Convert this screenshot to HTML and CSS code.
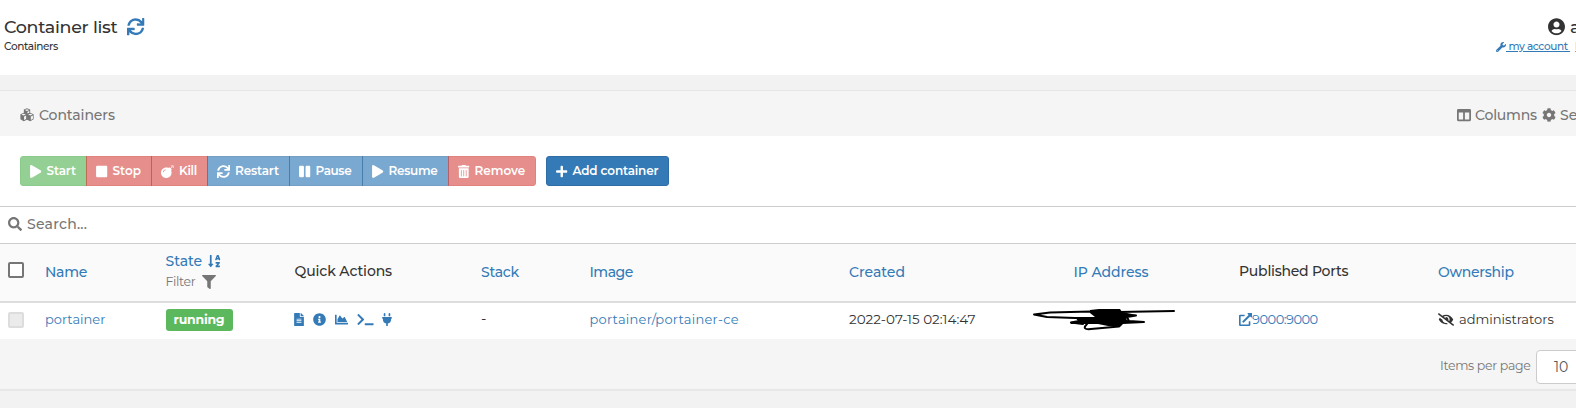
FILE: index.html
```
<!DOCTYPE html>
<html lang="en">
<head>
<meta charset="utf-8">
<title>Container list</title>
<link rel="stylesheet" href="styles.css">
</head>
<body>
<svg class="sprite" aria-hidden="true">
  <symbol id="sync" viewBox="0 0 512 512"><path d="M440.65 12.57l4 82.77A247.16 247.16 0 0 0 255.83 8C134.73 8 33.91 94.92 12.29 209.82A12 12 0 0 0 24.09 224h49.05a12 12 0 0 0 11.67-9.26 175.91 175.91 0 0 1 317-56.94l-101.46-4.86a12 12 0 0 0-12.57 12v47.41a12 12 0 0 0 12 12H500a12 12 0 0 0 12-12V12a12 12 0 0 0-12-12h-47.37a12 12 0 0 0-11.98 12.57zM255.83 432a175.61 175.61 0 0 1-146-77.8l101.8 4.87a12 12 0 0 0 12.57-12v-47.4a12 12 0 0 0-12-12H12a12 12 0 0 0-12 12V500a12 12 0 0 0 12 12h47.35a12 12 0 0 0 12-12.6l-4.15-82.57A247.17 247.17 0 0 0 255.83 504c121.11 0 221.93-86.92 243.55-201.82a12 12 0 0 0-11.8-14.18h-49.05a12 12 0 0 0-11.67 9.26A175.86 175.86 0 0 1 255.83 432z"/></symbol>
  <symbol id="play" viewBox="0 0 448 512"><path d="M424.4 214.7L72.4 6.6C43.8-10.3 0 6.1 0 47.9V464c0 37.5 40.7 60.1 72.4 41.3l352-208c31.4-18.5 31.5-64.1 0-82.6z"/></symbol>
  <symbol id="stop" viewBox="0 0 448 512"><rect y="32" width="448" height="448" rx="48"/></symbol>
  <symbol id="pause" viewBox="0 0 448 512"><rect y="32" width="192" height="448" rx="48"/><rect x="256" y="32" width="192" height="448" rx="48"/></symbol>
  <symbol id="bomb" viewBox="0 0 512 512"><path d="M440.500 88.500l-52 52L415 167c9.400 9.400 9.400 24.600 0 33.900l-17.400 17.400c11.800 26.100 18.400 55.100 18.400 85.600 0 114.900-93.100 208-208 208S0 418.900 0 304 93.100 96 208 96c30.500 0 59.500 6.600 85.600 18.400L311 97c9.400-9.400 24.600-9.400 33.900 0l26.500 26.500 52-52 17.100 17zM500 60h-24c-6.600 0-12 5.400-12 12s5.400 12 12 12h24c6.600 0 12-5.400 12-12s-5.400-12-12-12zM440 0c-6.600 0-12 5.400-12 12v24c0 6.600 5.400 12 12 12s12-5.400 12-12V12c0-6.600-5.400-12-12-12zm33.900 55l17-17c4.700-4.700 4.700-12.300 0-17-4.700-4.700-12.300-4.700-17 0l-17 17c-4.700 4.700-4.700 12.300 0 17 4.800 4.700 12.400 4.700 17 0zm-67.800 0c4.700 4.700 12.300 4.700 17 0 4.700-4.700 4.700-12.300 0-17l-17-17c-4.700-4.700-12.300-4.700-17 0-4.700 4.700-4.700 12.300 0 17l17 17zm67.800 34c-4.700-4.700-12.300-4.700-17 0-4.700 4.700-4.700 12.300 0 17l17 17c4.700 4.700 12.300 4.700 17 0 4.700-4.700 4.700-12.300 0-17l-17-17zM112 272c0-35.300 28.700-64 64-64 8.800 0 16-7.200 16-16s-7.200-16-16-16c-52.900 0-96 43.100-96 96 0 8.800 7.200 16 16 16s16-7.200 16-16z"/></symbol>
  <symbol id="trash" viewBox="0 0 448 512"><path fill-rule="evenodd" d="M32 464a48 48 0 0 0 48 48h288a48 48 0 0 0 48-48V128H32zm272-256a16 16 0 0 1 32 0v224a16 16 0 0 1-32 0zm-96 0a16 16 0 0 1 32 0v224a16 16 0 0 1-32 0zm-96 0a16 16 0 0 1 32 0v224a16 16 0 0 1-32 0zM432 32H312l-9.400-18.700A24 24 0 0 0 281.100 0H166.800a23.700 23.700 0 0 0-21.400 13.300L136 32H16A16 16 0 0 0 0 48v32a16 16 0 0 0 16 16h416a16 16 0 0 0 16-16V48a16 16 0 0 0-16-16z"/></symbol>
  <symbol id="plus" viewBox="0 0 448 512"><path d="M416 208H272V64c0-17.670-14.330-32-32-32h-32c-17.670 0-32 14.330-32 32v144H32c-17.670 0-32 14.330-32 32v32c0 17.670 14.330 32 32 32h144v144c0 17.670 14.330 32 32 32h32c17.670 0 32-14.330 32-32V304h144c17.670 0 32-14.330 32-32v-32c0-17.670-14.330-32-32-32z"/></symbol>
  <symbol id="search" viewBox="0 0 512 512"><path d="M505 442.700L405.300 343c-4.500-4.500-10.600-7-17-7H372c27.600-35.300 44-79.700 44-128C416 93.100 322.900 0 208 0S0 93.100 0 208s93.100 208 208 208c48.300 0 92.700-16.400 128-44v16.300c0 6.400 2.500 12.500 7 17l99.700 99.700c9.400 9.400 24.600 9.400 33.900 0l28.300-28.300c9.400-9.400 9.400-24.600.1-34zM208 336c-70.700 0-128-57.200-128-128 0-70.700 57.200-128 128-128 70.700 0 128 57.200 128 128 0 70.700-57.200 128-128 128z"/></symbol>
  <symbol id="filter" viewBox="0 0 512 512"><path d="M487.976 0H24.028C2.710 0-8.047 25.866 7.058 40.971L192 225.941V432c0 7.831 3.821 15.170 10.237 19.662l80 55.980C298.020 518.690 320 507.493 320 487.980V225.941l184.947-184.970C520.021 25.896 509.338 0 487.976 0z"/></symbol>
  <symbol id="sort" viewBox="0 0 448 512"><path d="M176 352h-48V48a16 16 0 0 0-16-16H80a16 16 0 0 0-16 16v304H16c-14.190 0-21.360 17.240-11.290 27.310l80 96a16 16 0 0 0 22.620 0l80-96C197.350 369.260 190.220 352 176 352zM416 288H288a16 16 0 0 0-16 16v32a16 16 0 0 0 16 16h56l-61.260 70.450A32 32 0 0 0 272 446.370V464a16 16 0 0 0 16 16h128a16 16 0 0 0 16-16v-32a16 16 0 0 0-16-16h-56l61.260-70.450A32 32 0 0 0 432 321.630V304a16 16 0 0 0-16-16zm31.060-85.380l-59.270-160A16 16 0 0 0 372.720 32h-41.440a16 16 0 0 0-15.070 10.620l-59.270 160A16 16 0 0 0 272 224h24.830a16 16 0 0 0 15.230-11.080l4.420-12.920h71l4.410 12.920A16 16 0 0 0 407.160 224H432a16 16 0 0 0 15.060-21.380zM335.610 144L352 96l16.390 48z"/></symbol>
  <symbol id="cubes" viewBox="0 0 512 512"><path fill-rule="evenodd" d="M256 8l116 44v125l126 50v180l-122 78-120-58-120 58-122-78V227l126-50V52zM256 44l-80 30 80 32 80-32zM272 200l68-28v-64l-68 28zM132 212l-84 30 84 34 84-34zM148 442l76-38V276l-76 32zM380 212l-84 30 84 34 84-34zM396 442l76-48V276l-76 32z"/></symbol>
  <symbol id="user" viewBox="0 0 496 512"><path d="M248 8C111 8 0 119 0 256s111 248 248 248 248-111 248-248S385 8 248 8zm0 96c48.600 0 88 39.400 88 88s-39.400 88-88 88-88-39.400-88-88 39.400-88 88-88zm0 344c-58.700 0-111.300-26.600-146.500-68.200 18.800-35.400 55.600-59.800 98.500-59.800 2.400 0 4.800.4 7.100 1.100 13 4.200 26.600 6.900 40.900 6.900 14.300 0 28-2.700 40.900-6.900 2.300-.7 4.700-1.100 7.100-1.100 42.900 0 79.700 24.400 98.500 59.800C359.300 421.400 306.700 448 248 448z"/></symbol>
  <symbol id="wrench" viewBox="0 0 512 512"><path d="M507.730 109.100c-2.240-9.030-13.540-12.090-20.120-5.510l-74.360 74.360-67.880-11.310-11.310-67.880 74.360-74.360c6.620-6.620 3.430-17.900-5.660-20.160-47.380-11.740-99.550.91-136.580 37.930-39.640 39.640-50.550 97.100-34.050 147.200L18.740 402.760c-24.990 24.990-24.990 65.510 0 90.500 24.990 24.990 65.510 24.990 90.500 0l213.210-213.210c50.120 16.710 107.470 5.680 147.370-34.220 37.070-37.070 49.700-89.320 37.910-136.730zM64 472c-13.250 0-24-10.750-24-24 0-13.260 10.750-24 24-24s24 10.740 24 24c0 13.250-10.750 24-24 24z"/></symbol>
  <symbol id="columns" viewBox="0 0 512 512"><path d="M464 32H48C21.490 32 0 53.490 0 80v352c0 26.510 21.490 48 48 48h416c26.510 0 48-21.490 48-48V80c0-26.510-21.490-48-48-48zM224 416H64V160h160v256zm224 0H288V160h160v256z"/></symbol>
  <symbol id="cog" viewBox="0 0 512 512"><path d="M487.400 315.700l-42.600-24.600c4.300-23.200 4.300-47 0-70.200l42.600-24.600c4.900-2.800 7.100-8.600 5.500-14-11.100-35.600-30-67.800-54.700-94.600-3.800-4.100-10-5.100-14.800-2.300L380.800 110c-17.900-15.400-38.500-27.300-60.800-35.100V25.800c0-5.600-3.900-10.500-9.400-11.700-36.700-8.200-74.300-7.800-109.200 0-5.500 1.200-9.400 6.100-9.400 11.700V75c-22.200 7.900-42.800 19.800-60.800 35.100L88.700 85.500c-4.900-2.800-11-1.900-14.800 2.300-24.700 26.700-43.600 58.900-54.700 94.600-1.700 5.400.6 11.200 5.500 14L67.300 221c-4.300 23.200-4.300 47 0 70.200l-42.600 24.600c-4.900 2.800-7.100 8.600-5.500 14 11.100 35.600 30 67.800 54.700 94.600 3.800 4.100 10 5.100 14.800 2.300l42.600-24.600c17.900 15.400 38.500 27.300 60.800 35.100v49.200c0 5.600 3.900 10.500 9.400 11.700 36.700 8.200 74.300 7.800 109.200 0 5.500-1.200 9.400-6.100 9.400-11.700v-49.200c22.200-7.900 42.800-19.800 60.800-35.100l42.600 24.600c4.900 2.800 11 1.900 14.800-2.300 24.700-26.700 43.600-58.900 54.700-94.600 1.500-5.500-.7-11.300-5.600-14.100zM256 336c-44.100 0-80-35.900-80-80s35.900-80 80-80 80 35.900 80 80-35.900 80-80 80z"/></symbol>
  <symbol id="file" viewBox="0 0 384 512"><path fill-rule="evenodd" d="M224 136V0H24A24 24 0 0 0 0 24v464a24 24 0 0 0 24 24h336a24 24 0 0 0 24-24V160H248a24 24 0 0 1-24-24zM96 224h192v36H96zm0 64h192v36H96zm0 64h192v36H96zM384 122v6H256V0h6a24 24 0 0 1 17 7l98 98a24 24 0 0 1 7 17z"/></symbol>
  <symbol id="info" viewBox="0 0 512 512"><path d="M256 8C119.043 8 8 119.083 8 256c0 136.997 111.043 248 248 248s248-111.003 248-248C504 119.083 392.957 8 256 8zm0 110c23.196 0 42 18.804 42 42s-18.804 42-42 42-42-18.804-42-42 18.804-42 42-42zm56 254c0 6.627-5.373 12-12 12h-88c-6.627 0-12-5.373-12-12v-24c0-6.627 5.373-12 12-12h12v-64h-12c-6.627 0-12-5.373-12-12v-24c0-6.627 5.373-12 12-12h64c6.627 0 12 5.373 12 12v100h12c6.627 0 12 5.373 12 12v24z"/></symbol>
  <symbol id="chart" viewBox="0 0 512 512"><path d="M500 384c6.600 0 12 5.400 12 12v40c0 6.600-5.400 12-12 12H12c-6.600 0-12-5.400-12-12V76c0-6.600 5.400-12 12-12h40c6.600 0 12 5.400 12 12v308h436zM372.700 159.500L288 216l-85.300-113.700c-5.100-6.800-15.500-6.300-19.900 1L96 248v104h384l-89.900-187.800c-3.200-6.500-11.400-8.700-17.400-4.700z"/></symbol>
  <symbol id="terminal" viewBox="0 0 640 512"><path d="M257.981 272.971L63.638 467.314c-9.373 9.373-24.569 9.373-33.941 0L7.029 444.647c-9.357-9.357-9.375-24.522-.04-33.901L161.011 256 6.990 101.255c-9.335-9.379-9.317-24.544.04-33.901l22.667-22.667c9.373-9.373 24.569-9.373 33.941 0L257.981 239.030c9.373 9.372 9.373 24.568 0 33.941zM640 456v-32c0-13.255-10.745-24-24-24H312c-13.255 0-24 10.745-24 24v32c0 13.255 10.745 24 24 24h304c13.255 0 24-10.745 24-24z"/></symbol>
  <symbol id="plug" viewBox="0 0 384 512"><path d="M320 32a32 32 0 0 0-64 0v96h64zm48 128H16A16 16 0 0 0 0 176v32a16 16 0 0 0 16 16h16v32a160.070 160.070 0 0 0 128 156.800V512h64v-99.200A160.070 160.070 0 0 0 352 256v-32h16a16 16 0 0 0 16-16v-32a16 16 0 0 0-16-16zM128 32a32 32 0 0 0-64 0v96h64z"/></symbol>
  <symbol id="external" viewBox="0 0 512 512"><path d="M432 320h-32a16 16 0 0 0-16 16v112H64V128h144a16 16 0 0 0 16-16V80a16 16 0 0 0-16-16H48a48 48 0 0 0-48 48v352a48 48 0 0 0 48 48h352a48 48 0 0 0 48-48V336a16 16 0 0 0-16-16zM488 0H360c-21.370 0-32.050 25.910-17 41l35.730 35.730L135 320.370a24 24 0 0 0 0 34L157.670 377a24 24 0 0 0 34 0l243.610-243.680L471 169c15 15 41 4.500 41-17V24a24 24 0 0 0-24-24z"/></symbol>
  <symbol id="eye-slash" viewBox="0 0 640 512"><path d="M320 400c-75.850 0-137.250-58.710-142.900-133.110L72.200 185.820c-13.790 17.300-26.480 35.590-36.720 55.590a32.350 32.350 0 0 0 0 29.190C89.710 376.410 197.070 448 320 448c26.910 0 52.870-4 77.890-10.460L346 397.390a144.130 144.130 0 0 1-26 2.610zm313.820 58.100l-110.550-85.440a331.250 331.250 0 0 0 81.250-102.070 32.350 32.350 0 0 0 0-29.190C550.290 135.590 442.930 64 320 64a308.150 308.150 0 0 0-147.320 37.700L45.460 3.370A16 16 0 0 0 23 6.180L3.370 31.450A16 16 0 0 0 6.180 53.900l588.360 454.730a16 16 0 0 0 22.460-2.810l19.640-25.270a16 16 0 0 0-2.820-22.450zm-183.720-142l-39.300-30.380A94.750 94.750 0 0 0 416 256a94.760 94.760 0 0 0-121.310-92.210A47.650 47.650 0 0 1 304 192a46.640 46.640 0 0 1-1.540 10l-73.610-56.890A142.310 142.310 0 0 1 320 112a143.920 143.920 0 0 1 144 144c0 21.630-5.290 41.790-13.900 60.110z"/></symbol>
</svg>

<header class="top">
  <div class="top-left">
    <h1 class="title"><span class="title-text">Container list</span><svg class="icon refresh"><use href="#sync"/></svg></h1>
    <div class="crumb">Containers</div>
  </div>
  <div class="top-right">
    <div class="user"><svg class="icon user-icon"><use href="#user"/></svg><span>admin</span></div>
    <div class="links">
      <a class="account"><svg class="icon wrench"><use href="#wrench"/></svg><span class="account-text">&nbsp;my account&nbsp;</span></a>
      <a class="logout">log out</a>
    </div>
  </div>
</header>

<main class="widget">
  <div class="widget-head">
    <div class="heading"><svg class="icon cubes"><use href="#cubes"/></svg><span class="t-containers">Containers</span></div>
    <div class="tools">
      <svg class="icon i14"><use href="#columns"/></svg><span class="t-columns">Columns</span>
      <svg class="icon i14"><use href="#cog"/></svg><span class="t-settings">Settings</span>
    </div>
  </div>

  <div class="actions">
    <div class="group">
      <button class="btn green b-start"><svg class="icon w-play"><use href="#play"/></svg><span>Start</span></button>
      <button class="btn red b-stop"><svg class="icon w-play"><use href="#stop"/></svg><span>Stop</span></button>
      <button class="btn red b-kill"><svg class="icon w-sync"><use href="#bomb"/></svg><span>Kill</span></button>
      <button class="btn blue b-restart"><svg class="icon w-sync"><use href="#sync"/></svg><span>Restart</span></button>
      <button class="btn blue b-pause"><svg class="icon w-play"><use href="#pause"/></svg><span>Pause</span></button>
      <button class="btn blue b-resume"><svg class="icon w-play"><use href="#play"/></svg><span>Resume</span></button>
      <button class="btn red b-remove"><svg class="icon w-play"><use href="#trash"/></svg><span>Remove</span></button>
    </div>
    <button class="btn add"><svg class="icon w-play"><use href="#plus"/></svg><span>Add container</span></button>
  </div>

  <div class="search"><svg class="icon i14"><use href="#search"/></svg><span>Search...</span></div>

  <div class="row thead">
    <div><span class="check"></span></div>
    <div class="link t-name">Name</div>
    <div class="state">
      <div class="link state-top"><span class="t-state">State</span><svg class="icon sort"><use href="#sort"/></svg></div>
      <div class="filter"><span class="t-filter">Filter</span><svg class="icon i14"><use href="#filter"/></svg></div>
    </div>
    <div class="plain">Quick Actions</div>
    <div class="link t-stack">Stack</div>
    <div class="link t-image">Image</div>
    <div class="link">Created</div>
    <div class="link t-ip">IP Address</div>
    <div class="plain t-ports">Published Ports</div>
    <div class="link t-owner">Ownership</div>
  </div>

  <div class="row tbody">
    <div><span class="check disabled"></span></div>
    <div class="blue-text">portainer</div>
    <div><span class="badge">running</span></div>
    <div class="quick">
      <svg class="icon q-file"><use href="#file"/></svg>
      <svg class="icon q-info"><use href="#info"/></svg>
      <svg class="icon q-info"><use href="#chart"/></svg>
      <svg class="icon q-term"><use href="#terminal"/></svg>
      <svg class="icon q-file"><use href="#plug"/></svg>
    </div>
    <div>-</div>
    <div class="blue-text t-ce">portainer/portainer-ce</div>
    <div class="t-date">2022-07-15 02:14:47</div>
    <div class="redacted">
      <svg class="scribble" viewBox="0 0 144 24">
        <path fill="none" stroke="#000" stroke-width="2" stroke-linecap="round" stroke-linejoin="round" d="M141 4L86 5 58 4.500 17 5.500 1 7.500 14 10 42 11 62 11M44 11L46 14 38 15.500 50 17M84 8.500L103 8.500 94 10 96 14 111 15M54 17Q48 23 58 22L86 19.500"/>
        <path d="M57 3L66 2 87 2 89 5 104 8 96 9.500 93 12 96 14 111 14 111 16 90 17 87 20 75 19 65 17 38 17 37 15 46 14 44 11 62 10 57 6z"/>
      </svg>
    </div>
    <div class="blue-text ports"><svg class="icon ext"><use href="#external"/></svg><span>9000:9000</span></div>
    <div class="owner"><svg class="icon eye"><use href="#eye-slash"/></svg><span>administrators</span></div>
  </div>

  <footer class="pager"><span class="per-page">Items per page</span><span class="select">10</span></footer>
</main>
</body>
</html>
```
FILE: styles.css
```
* { box-sizing: border-box; }
body {
  margin: 0;
  height: 408px;
  overflow: hidden;
  background: #f2f2f2;
  color: #333;
  font-family: Montserrat, Inter, "Liberation Sans", sans-serif;
  font-size: 14px;
  line-height: 20px;
}
.sprite { display: none; }
.icon { display: block; flex: none; fill: currentColor; }
.i14 { width: 14px; height: 14px; }

.top { display: flex; height: 75px; background: #fff; }
.top-left { flex: 0 0 1496px; padding: 17px 0 0 4px; }
.title { display: flex; align-items: center; gap: 10px; margin: 0; height: 20px; font-size: 17.5px; font-weight: 500; }
.title-text { width: 113px; letter-spacing: -0.3px; white-space: nowrap; }
.refresh { width: 17.5px; height: 17.5px; color: #337ab7; }
.crumb { font-size: 10.5px; font-weight: 500; line-height: 20px; letter-spacing: -0.37px; }
.top-right { flex: none; width: 120px; padding-top: 17px; }
.user { display: flex; align-items: center; gap: 5px; height: 20px; padding-left: 52px; font-size: 17.5px; font-weight: 500; }
.user-icon { width: 17px; height: 17.5px; }
.links { display: flex; gap: 5px; font-size: 10.5px; font-weight: 500; line-height: 20px; white-space: nowrap; }
.account { display: flex; align-items: center; color: #337ab7; }
.wrench { width: 10px; height: 10px; }
.account-text { letter-spacing: -0.38px; text-decoration: underline; text-underline-offset: 1px; }
.logout { color: #d9843c; text-decoration: underline; }

.widget { margin-top: 15px; border-top: 1px solid #e7e7e7; border-bottom: 2px solid #e7e7e7; background: #fff; }
.widget-head { display: flex; height: 45px; align-items: center; padding: 2px 0 0 20px; background: #f5f5f5; color: #767676; font-weight: 550; }
.heading { display: flex; align-items: center; flex: 0 0 1437px; gap: 5px; }
.cubes { width: 14px; height: 14px; }
.t-containers { letter-spacing: -0.08px; }
.tools { display: flex; flex: none; align-items: center; }
.t-columns { width: 62px; margin: 0 5px 0 4px; letter-spacing: -0.22px; }
.t-settings { margin-left: 4px; }

.actions { display: flex; gap: 10px; padding: 20px; height: 70px; }
.group { display: flex; }
.btn {
  display: flex; align-items: center; gap: 5px; height: 30px; padding: 0 0 0 9px;
  border: 1px solid; color: #fff; font: 600 12px/18px Montserrat, Inter, sans-serif; white-space: nowrap;
}
/* Each disabled button fades on its own, so the shared borders read darker. */
.group .btn { opacity: 0.65; }
.group .btn + .btn { margin-left: -1px; }
.green { background: #5cb85c; border-color: #4cae4c; }
.red { background: #d9534f; border-color: #d43f3a; }
.blue { background: #337ab7; border-color: #2e6da4; }
.w-play { width: 11.5px; height: 13px; }
.w-sync { width: 13px; height: 13px; }
.b-start { width: 67px; border-radius: 3px 0 0 3px; letter-spacing: -0.12px; }
.b-stop { width: 66px; }
.b-kill { width: 57px; letter-spacing: -0.3px; }
.b-restart { width: 83px; letter-spacing: -0.14px; }
.b-pause { width: 74px; letter-spacing: -0.38px; }
.b-resume { width: 87px; letter-spacing: -0.3px; }
.b-remove { width: 88px; border-radius: 0 3px 3px 0; }
.add { width: 123px; background: #337ab7; border-color: #2e6da4; border-radius: 3px; letter-spacing: -0.16px; }

.search {
  display: flex; align-items: center; gap: 5px; height: 38px; padding: 0 8px 2px;
  border: solid #ccc; border-width: 1px 0; color: #767676; font-weight: 500; letter-spacing: 0.25px;
}

.row {
  display: grid;
  grid-template-columns: 37px 120.5px 129px 186.5px 108.500px 259.500px 224.500px 165.500px 199px 138px;
  align-items: center;
  padding-left: 8px;
  white-space: nowrap;
}
.thead { height: 59px; padding-bottom: 2px; background: #fafafa; border-bottom: 2px solid #ddd; font-weight: 550; }
.tbody { height: 36px; padding-bottom: 4px; }
.link { color: #337ab7; padding-top: 1px; }
.blue-text, .owner { color: #337ab7; font-size: 13px; }
.plain { letter-spacing: -0.1px; padding-bottom: 1px; }
.check { display: block; width: 16px; height: 16px; margin-top: -3px; border: 2px solid #767676; border-radius: 2px; background: #fff; }
.check.disabled { margin-top: 2px; border-color: #ddd; background: #ebebeb; }
.t-name { letter-spacing: -0.3px; }
.t-stack { letter-spacing: -0.25px; }
.t-image { letter-spacing: -0.5px; }
.t-ip { letter-spacing: -0.07px; }
.t-ports { letter-spacing: -0.25px; }
.t-owner { letter-spacing: -0.27px; }
.state-top { display: flex; align-items: center; gap: 6px; padding: 0; }
.sort { width: 12.500px; height: 14px; }
.filter { display: flex; align-items: center; gap: 6px; padding-top: 1px; color: #767676; font-size: 12.5px; font-weight: 400; }
.t-filter { width: 30px; letter-spacing: -0.35px; }
.badge { display: block; width: 67px; height: 22px; margin-top: 2px; border-radius: 3px; background: #5cb85c; color: #fff; font-size: 12.5px; font-weight: 700; line-height: 21px; text-align: center; letter-spacing: -0.24px; }
.quick { display: flex; align-items: center; margin-left: -0.5px; color: #337ab7; }
.q-file { width: 10px; height: 13px; }
.q-info { width: 13px; height: 13px; margin-left: 9px; }
.q-term { width: 17px; height: 13px; margin: 0 8.5px; }
.t-ce { letter-spacing: 0.25px; }
.t-date { font-size: 13.500px; }
.redacted { margin-left: -41px; }
.scribble { display: block; width: 144px; height: 24px; }
.ports { display: flex; align-items: center; }
.ports span { letter-spacing: -0.5px; }
.ext { width: 13px; height: 13px; }
.owner { display: flex; align-items: center; gap: 5px; color: #333; }
.eye { width: 16px; height: 13px; }

.pager { display: flex; align-items: flex-start; height: 50px; padding: 11px 0 0 1440px; background: #f5f5f5; color: #767676; font-size: 12.500px; white-space: nowrap; }
.per-page { flex: 0 0 96px; padding-top: 6px; letter-spacing: -0.33px; }
.select { flex: none; width: 70px; height: 34px; padding-left: 17px; border: 1px solid #ccc; border-radius: 4px; background: #fff; color: #555; font-size: 14px; line-height: 32px; }
```
